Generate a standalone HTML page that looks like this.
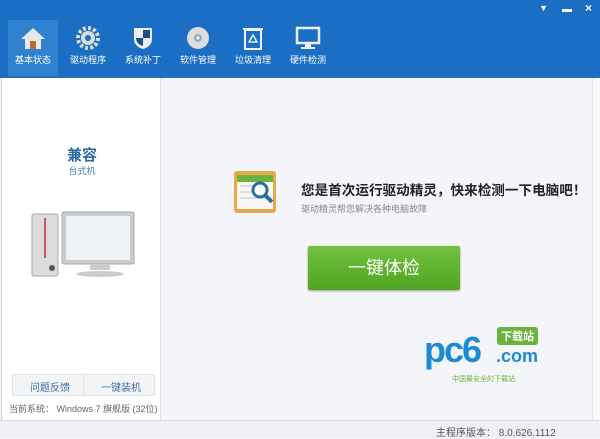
<!DOCTYPE html>
<html><head><meta charset="utf-8"><style>
*{margin:0;padding:0;box-sizing:border-box}
body{width:600px;height:438px;overflow:hidden;font-family:"Liberation Sans","Noto Sans CJK SC",sans-serif;background:#f3f5f8;position:relative}
.hdr{position:absolute;left:0;top:0;width:600px;height:78px;background:#1a6ec3}
.tab{position:absolute;top:20px;width:50px;height:56px;text-align:center;color:#fff;font-size:9px}
.tab svg{display:block;margin:6px auto 3px}
.sel{background:#2f82cf}
.left{position:absolute;left:1px;top:78px;width:160px;height:342px;background:#fff;border-right:1px solid #dfe3e8;border-left:1px solid #c8d4e2}
.status{position:absolute;left:0;top:420px;width:600px;height:18px;background:#eef0f3;border-top:1px solid #d8dce2;font-size:10px;color:#555}
</style></head><body>
<div class="hdr">
 <div style="position:absolute;right:52px;top:3px;color:#fff;font-size:9px">▼</div>
 <div style="position:absolute;right:28px;width:10px;height:3px;background:#fff;top:9px"></div>
 <div style="position:absolute;right:8px;top:1px;color:#fff;font-size:12px;font-weight:bold">×</div>
 <div class="tab sel" style="left:8px"><svg width="26" height="24"><path d="M13 2 L25 13 L21 13 L21 23 L5 23 L5 13 L1 13Z" fill="#e8e8e8"/><rect x="10" y="15" width="6" height="8" fill="#b46a3c"/></svg>基本状态</div>
 <div class="tab" style="left:63px"><svg width="26" height="24"><circle cx="13" cy="12" r="10" fill="none" stroke="#ddd" stroke-width="4" stroke-dasharray="3 2.2"/><circle cx="13" cy="12" r="7" fill="#ddd"/><circle cx="13" cy="12" r="3" fill="#1a6ec3"/></svg>驱动程序</div>
 <div class="tab" style="left:118px"><svg width="26" height="24"><path d="M4 2 H22 V13 C22 19 17 22 13 23 C9 22 4 19 4 13Z" fill="#eee"/><path d="M13 4 H20 V12 H13Z" fill="#1a4f8a"/><path d="M6 12 H13 V20 C9 19 6 16 6 12Z" fill="#1a4f8a"/></svg>系统补丁</div>
 <div class="tab" style="left:173px"><svg width="26" height="24"><circle cx="13" cy="12" r="11" fill="#ddd"/><circle cx="13" cy="12" r="4" fill="#9ab"/><circle cx="13" cy="12" r="1.5" fill="#fff"/></svg>软件管理</div>
 <div class="tab" style="left:228px"><svg width="26" height="24"><rect x="5" y="4" width="16" height="19" fill="none" stroke="#eee" stroke-width="2"/><rect x="3" y="2" width="20" height="2" fill="#eee"/><path d="M13 9 L17 16 L9 16Z" fill="none" stroke="#eee" stroke-width="1.5"/></svg>垃圾清理</div>
 <div class="tab" style="left:283px"><svg width="26" height="24"><rect x="2" y="2" width="22" height="15" fill="none" stroke="#eee" stroke-width="2.5"/><rect x="10" y="18" width="6" height="3" fill="#eee"/><rect x="6" y="21" width="14" height="2" fill="#eee"/></svg>硬件检测</div>
</div>
<div class="left">
 <div style="position:absolute;top:66px;width:160px;text-align:center;color:#2c6aa8;font-size:15px;font-weight:bold">兼容</div>
 <div style="position:absolute;top:86px;width:160px;text-align:center;color:#4a7ab0;font-size:9px">台式机</div>
 <svg style="position:absolute;left:26px;top:132px" width="110" height="70">
  <rect x="4" y="4" width="26" height="62" rx="2" fill="#dcdcdc" stroke="#aaa"/>
  <rect x="16" y="8" width="2" height="40" fill="#c55"/>
  <circle cx="24" cy="58" r="3" fill="#555"/>
  <rect x="34" y="2" width="72" height="52" rx="2" fill="#ccc" stroke="#aaa"/>
  <rect x="38" y="6" width="64" height="44" fill="#eef3f7"/>
  <rect x="62" y="54" width="20" height="6" fill="#ccc"/>
  <ellipse cx="72" cy="64" rx="24" ry="3" fill="#ccc"/>
 </svg>
 <div style="position:absolute;left:10px;top:296px;width:143px;height:22px;background:#f3f4f6;border:1px solid #e1e3e6;font-size:10px;color:#3a6ea5">
  <span style="position:absolute;left:17px;top:4px">问题反馈</span>
  <div style="position:absolute;left:70px;top:0;width:1px;height:20px;background:#e0e0e0"></div>
  <span style="position:absolute;left:88px;top:4px">一键装机</span>
 </div>
 <div style="position:absolute;left:7px;top:324px;font-size:9px;color:#666">当前系统： Windows 7 旗舰版 (32位)</div>
</div>
<svg style="position:absolute;left:232px;top:167px" width="46" height="48">
 <rect x="2" y="4" width="42" height="42" rx="3" fill="#e7a94a"/>
 <rect x="5" y="8" width="36" height="34" fill="#f7f7f7"/>
 <rect x="5" y="8" width="36" height="7" fill="#6cb33e"/>
 <g fill="#d8dee6"><rect x="8" y="18" width="28" height="2"/><rect x="8" y="24" width="28" height="2"/><rect x="8" y="30" width="28" height="2"/></g>
 <circle cx="28" cy="23" r="7" fill="#fff" stroke="#2a6e9e" stroke-width="3"/>
 <path d="M33 28 L40 35" stroke="#2a6e9e" stroke-width="4"/>
</svg>
<div style="position:absolute;left:301px;top:179px;font-size:13.6px;font-weight:bold;color:#222">您是首次运行驱动精灵，快来检测一下电脑吧！</div>
<div style="position:absolute;left:301px;top:202px;font-size:9px;color:#888">驱动精灵帮您解决各种电脑故障</div>
<div style="position:absolute;left:308px;top:246px;width:152px;height:44px;background:linear-gradient(#72c23e,#4ea521);border-radius:2px;color:#fff;font-size:18px;text-align:center;line-height:44px;box-shadow:0 1px 2px #999">一键体检</div>
<div style="position:absolute;left:424px;top:332px;font-size:36px;font-weight:bold;color:#1d8ad6;letter-spacing:-2px;line-height:36px">pc6</div>
<div style="position:absolute;left:496px;top:346px;font-size:18px;color:#1d8ad6;font-weight:bold">.com</div>
<div style="position:absolute;left:497px;top:327px;background:#6cb33e;color:#fff;font-size:11px;font-weight:bold;padding:1px 4px;border-radius:3px">下载站</div>
<div style="position:absolute;left:452px;top:374px;font-size:7px;color:#6cb33e">中国最安全的下载站</div>
<div style="position:absolute;left:592px;top:78px;width:8px;height:342px;background:#f8f9fb;border-left:1px solid #e4e6ea"></div>
<div class="status"><span style="position:absolute;left:436px;top:3px">主程序版本： 8.0.626.1112</span></div>
</body></html>
